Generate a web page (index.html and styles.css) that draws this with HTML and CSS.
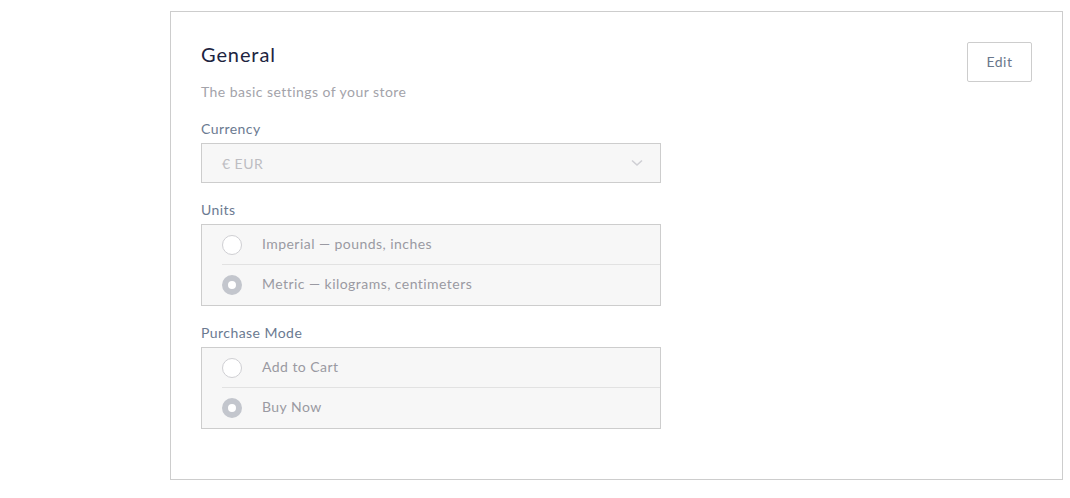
FILE: index.html
```html
<!DOCTYPE html>
<html>
<head>
<meta charset="utf-8">
<link rel="stylesheet" href="styles.css">
</head>
<body>
<div class="page">
  <section class="card">
    <div class="card-head">
      <h2 class="title">General</h2>
      <button class="edit-btn">Edit</button>
    </div>
    <p class="subtitle">The basic settings of your store</p>

    <div class="field">
      <div class="label">Currency</div>
      <div class="select">
        <span>€ EUR</span>
        <svg class="chevron" width="12" height="8" viewBox="0 0 12 8"><path d="M1 1.5 L6 6 L11 1.5" fill="none" stroke="#cfcfd4" stroke-width="1.6"/></svg>
      </div>
    </div>

    <div class="field">
      <div class="label">Units</div>
      <div class="radio-group">
        <div class="radio-row"><span class="radio"></span><span class="radio-text">Imperial — pounds, inches</span></div>
        <div class="radio-row"><span class="radio checked"></span><span class="radio-text">Metric — kilograms, centimeters</span></div>
      </div>
    </div>

    <div class="field">
      <div class="label">Purchase Mode</div>
      <div class="radio-group">
        <div class="radio-row"><span class="radio"></span><span class="radio-text">Add to Cart</span></div>
        <div class="radio-row"><span class="radio checked"></span><span class="radio-text">Buy Now</span></div>
      </div>
    </div>
  </section>
</div>
</body>
</html>
```

FILE: styles.css
```css
* { box-sizing: border-box; }
html, body { margin: 0; padding: 0; background: #fff; }
body { font-family: "Lato", "Noto Sans", sans-serif; letter-spacing: 0.45px; }

.page { padding: 11px 7px 0 170px; }

.card {
  border: 1px solid #cdcdcd;
  width: 893px;
  height: 469px;
  padding: 30px 30px 50px 30px;
}

.card-head {
  display: flex;
  justify-content: space-between;
  align-items: flex-start;
}

.title {
  margin: 0;
  font-size: 20px;
  line-height: 24px;
  font-weight: 400;
  letter-spacing: 0.9px;
  color: #1d2440;
}

.edit-btn {
  width: 65px;
  height: 40px;
  border: 1px solid #cdcdcd;
  background: #fff;
  border-radius: 2px;
  font-family: inherit;
  font-size: 14px;
  letter-spacing: 0.45px;
  color: #69778c;
  padding: 0 0 2px 0;
}

.subtitle {
  margin: 0;
  font-size: 14px;
  line-height: 20px;
  color: #a3a3aa;
}

.field { margin-top: 17px; width: 460px; }

.label {
  font-size: 14px;
  line-height: 20px;
  color: #6b7a91;
  margin-bottom: 4px;
}

.select {
  height: 40px;
  border: 1px solid #cdcdcd;
  background: #f7f7f7;
  display: flex;
  align-items: center;
  justify-content: space-between;
  padding: 0 17px 0 20px;
  font-size: 14px;
  color: #bdbdc2;
}

.radio-group {
  border: 1px solid #cdcdcd;
  background: #f7f7f7;
  padding-left: 20px;
}

.radio-row {
  height: 39px;
  display: flex;
  align-items: center;
}
.radio-row + .radio-row { border-top: 1px solid #e2e2e2; height: 41px; }

.radio {
  width: 20px;
  height: 20px;
  border-radius: 50%;
  border: 1px solid #cfcfd3;
  background: #fff;
  margin-right: 20px;
  flex: none;
}
.radio.checked {
  background: #fff;
  border: 6px solid #c3c6cd;
}

.radio-text {
  font-size: 14px;
  line-height: 20px;
  padding-bottom: 2px;
  color: #9a9aa2;
}
```
